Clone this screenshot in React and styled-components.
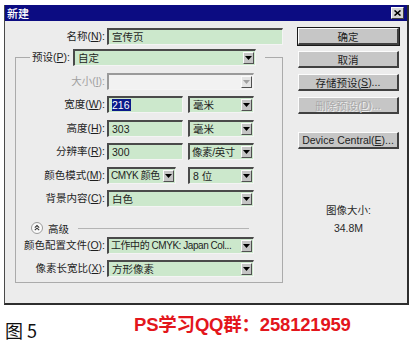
import React from 'react';
import styled, { createGlobalStyle } from 'styled-components';

const Global = createGlobalStyle`
  html, body { margin: 0; padding: 0; background: #fff; }
  body { font-family: "Liberation Sans", "Noto Sans CJK SC", sans-serif; }
`;

const Page = styled.div`
  width: 416px;
  height: 342px;
  box-sizing: border-box;
  padding: 5px 0 0 4px;
  display: flex;
  flex-direction: column;
`;

const Dialog = styled.div`
  width: 405px;
  height: 300px;
  box-sizing: border-box;
  background: #ececec;
  border: 1px solid #4a4a4a;
  border-top: none;
  border-right: 2px solid #2e2e2e;
  border-bottom: 2px solid #2e2e2e;
  display: flex;
  flex-direction: column;
`;

const TitleBar = styled.div`
  height: 16px;
  background: #0c0c82;
  color: #fff;
  display: flex;
  align-items: center;
  justify-content: space-between;
  padding: 0 3px 0 2px;
  font-size: 11px;
  font-weight: 500;
`;

const CloseBtn = styled.div`
  width: 11px;
  height: 10px;
  background: #d4d4d4;
  border-top: 1px solid #fff;
  border-left: 1px solid #fff;
  border-right: 1px solid #404040;
  border-bottom: 1px solid #404040;
  display: flex;
  align-items: center;
  justify-content: center;
`;

const Body = styled.div`
  display: flex;
  padding-top: 7px;
`;

const LeftCol = styled.div`
  width: 278px;
  display: flex;
  flex-direction: column;
`;

const Label = styled.label`
  font-size: 10.5px;
  color: ${p => (p.$disabled ? '#a0a0a0' : '#1e1e1e')};
  text-align: right;
  white-space: nowrap;
  line-height: 17px;
  u { text-decoration: underline; }
`;

const NameRow = styled.div`
  display: grid;
  grid-template-columns: 100px 176px;
  column-gap: 2px;
  height: 17px;
`;

const Field = styled.div`
  height: 17px;
  box-sizing: border-box;
  width: ${p => p.$w || 'auto'};
  background: ${p => (p.$disabled ? '#f2f2f2' : '#cce8cc')};
  border-top: 2px solid ${p => (p.$disabled ? '#9a9a9a' : '#4a4a4a')};
  border-left: 2px solid ${p => (p.$disabled ? '#9a9a9a' : '#4a4a4a')};
  border-right: 1px solid #f4f4f4;
  border-bottom: 1px solid #f4f4f4;
  display: flex;
  align-items: center;
  font-size: ${p => p.$fs || 10.5}px;
  letter-spacing: ${p => p.$ls || 0}px;
  color: #1e1e1e;
  padding-left: ${p => (p.$ls ? 2 : 3)}px;
  white-space: nowrap;
  overflow: hidden;
`;

const FieldText = styled.span`
  flex: 1;
  overflow: hidden;
  line-height: 14px;
`;

const Selected = styled.span`
  background: #0a1a8a;
  color: #fff;
  padding: 0 1px;
  margin-left: -1px;
  line-height: 13px;
`;

const Arrow = styled.span`
  width: 11px;
  height: 12px;
  margin-right: 1px;
  box-sizing: border-box;
  background: ${p => (p.$disabled ? '#e4e4e4' : '#c4c4c4')};
  border-top: 1px solid #fafafa;
  border-left: 1px solid #fafafa;
  border-right: 1px solid #505050;
  border-bottom: 1px solid #505050;
  display: flex;
  align-items: center;
  justify-content: center;
  flex: none;
`;

const Fieldset = styled.fieldset`
  margin: 3px 0 0 10px;
  width: 268px;
  box-sizing: border-box;
  border: 1px solid #ababab;
  padding: 7px 0 5px 0;
  min-width: 0;
`;

const Legend = styled.legend`
  margin-left: 14px;
  padding: 0 9px 0 2px;
  display: flex;
  align-items: center;
  gap: 3px;
  height: 18px;
`;

const Grid = styled.div`
  display: grid;
  grid-template-columns: 89px 147px;
  column-gap: 2px;
  grid-auto-rows: 17px;
  row-gap: 6.4px;
`;

const Pair = styled.div`
  display: flex;
  justify-content: space-between;
`;

const Advanced = styled.div`
  grid-column: 1 / 3;
  height: 30px;
  display: flex;
  align-items: center;
  padding-left: 15px;
  gap: 5px;
  font-size: 10.5px;
  color: #1e1e1e;
`;

const Rule = styled.div`
  width: 171px;
  height: 1px;
  background: #b4b4b4;
  margin-left: 4px;
`;

const RightCol = styled.div`
  margin-left: 15px;
  width: 101px;
  display: flex;
  flex-direction: column;
  gap: 6px;
`;

const Button = styled.div`
  height: 17px;
  box-sizing: border-box;
  background: #c6c6c6;
  border-top: 1px solid #fcfcfc;
  border-left: 1px solid #fcfcfc;
  border-right: 2px solid #404040;
  border-bottom: 2px solid #404040;
  outline: ${p => (p.$default ? '1px solid #1a1a1a' : 'none')};
  display: flex;
  align-items: center;
  justify-content: center;
  font-size: 10.5px;
  color: ${p => (p.$disabled ? '#a8a8a8' : '#1e1e1e')};
  text-shadow: ${p => (p.$disabled ? '1px 1px 0 #f0f0f0' : 'none')};
  margin-top: ${p => p.$mt || 0}px;
  white-space: nowrap;
`;

const Info = styled.div`
  margin-top: 48px;
  display: flex;
  flex-direction: column;
  align-items: center;
  gap: 4px;
  font-size: 10.5px;
  color: #2a2a2a;
  line-height: 14px;
`;

const Caption = styled.div`
  display: flex;
  align-items: flex-start;
  padding-top: 9px;
`;

const Fig = styled.div`
  width: 129px;
  padding: 6px 0 0 1px;
  font-size: 18px;
  line-height: 20px;
  color: #111;
  font-family: "Noto Sans CJK SC", "Liberation Serif", serif;
`;

const Promo = styled.div`
  font-size: 18.5px;
  line-height: 22px;
  font-weight: 700;
  color: #e3161c;
  font-family: "Liberation Sans", "Noto Sans CJK SC", sans-serif;
  letter-spacing: -0.2px;
`;

const Tri = ({ disabled }) => (
  <svg width="7" height="4" viewBox="0 0 7 4">
    <path d="M0 0h7L3.5 4z" fill={disabled ? '#a0a0a0' : '#000'} />
  </svg>
);

const Select = ({ w, children, disabled, fs, ls }) => (
  <Field $w={w} $disabled={disabled} $fs={fs} $ls={ls}>
    <FieldText>{children}</FieldText>
    <Arrow $disabled={disabled}><Tri disabled={disabled} /></Arrow>
  </Field>
);

const Expander = () => (
  <svg width="12" height="12" viewBox="0 0 12 12">
    <circle cx="6" cy="6" r="5.5" fill="#fafafa" stroke="#9a9a9a" />
    <path d="M3.8 5.6L6 3.6 8.2 5.6M3.8 8.2L6 6.2 8.2 8.2" fill="none" stroke="#333" strokeWidth="1.1" />
  </svg>
);

const L = ({ t, k, disabled }) => (
  <Label $disabled={disabled}>{t}(<u>{k}</u>):</Label>
);

export default function App() {
  return (
    <Page>
      <Global />
      <Dialog>
        <TitleBar>
          <span>新建</span>
          <CloseBtn>
            <svg width="7" height="6" viewBox="0 0 7 6">
              <path d="M0.5 0.5L6.5 5.5M6.5 0.5L0.5 5.5" stroke="#000" strokeWidth="1.6" />
            </svg>
          </CloseBtn>
        </TitleBar>
        <Body>
          <LeftCol>
            <NameRow>
              <L t="名称" k="N" />
              <Field><FieldText>宣传页</FieldText></Field>
            </NameRow>
            <Fieldset>
              <Legend>
                <L t="预设" k="P" />
                <Select w="183px">自定</Select>
              </Legend>
              <Grid>
                <L t="大小" k="I" disabled />
                <Select disabled>{''}</Select>

                <L t="宽度" k="W" />
                <Pair>
                  <Field $w="76px"><FieldText><Selected>216</Selected></FieldText></Field>
                  <Select w="66px">毫米</Select>
                </Pair>

                <L t="高度" k="H" />
                <Pair>
                  <Field $w="76px"><FieldText>303</FieldText></Field>
                  <Select w="66px">毫米</Select>
                </Pair>

                <L t="分辨率" k="R" />
                <Pair>
                  <Field $w="76px"><FieldText>300</FieldText></Field>
                  <Select w="66px" ls={-0.4}>像素/英寸</Select>
                </Pair>

                <L t="颜色模式" k="M" />
                <Pair>
                  <Select w="69px" fs={10} ls={-0.4}>CMYK 颜色</Select>
                  <Select w="66px">8 位</Select>
                </Pair>

                <L t="背景内容" k="C" />
                <Select>白色</Select>

                <Advanced>
                  <Expander />
                  <span>高级</span>
                  <Rule />
                </Advanced>

                <L t="颜色配置文件" k="O" />
                <Select fs={10} ls={-0.45}>工作中的 CMYK: Japan Col...</Select>

                <L t="像素长宽比" k="X" />
                <Select>方形像素</Select>
              </Grid>
            </Fieldset>
          </LeftCol>
          <RightCol>
            <Button $default>确定</Button>
            <Button>取消</Button>
            <Button>存储预设(<u>S</u>)...</Button>
            <Button $disabled>删除预设(<u>D</u>)...</Button>
            <Button $mt={12}>Device Central(<u>E</u>)...</Button>
            <Info>
              <span>图像大小:</span>
              <span>34.8M</span>
            </Info>
          </RightCol>
        </Body>
      </Dialog>
      <Caption>
        <Fig>图 5</Fig>
        <Promo>PS学习QQ群：258121959</Promo>
      </Caption>
    </Page>
  );
}
